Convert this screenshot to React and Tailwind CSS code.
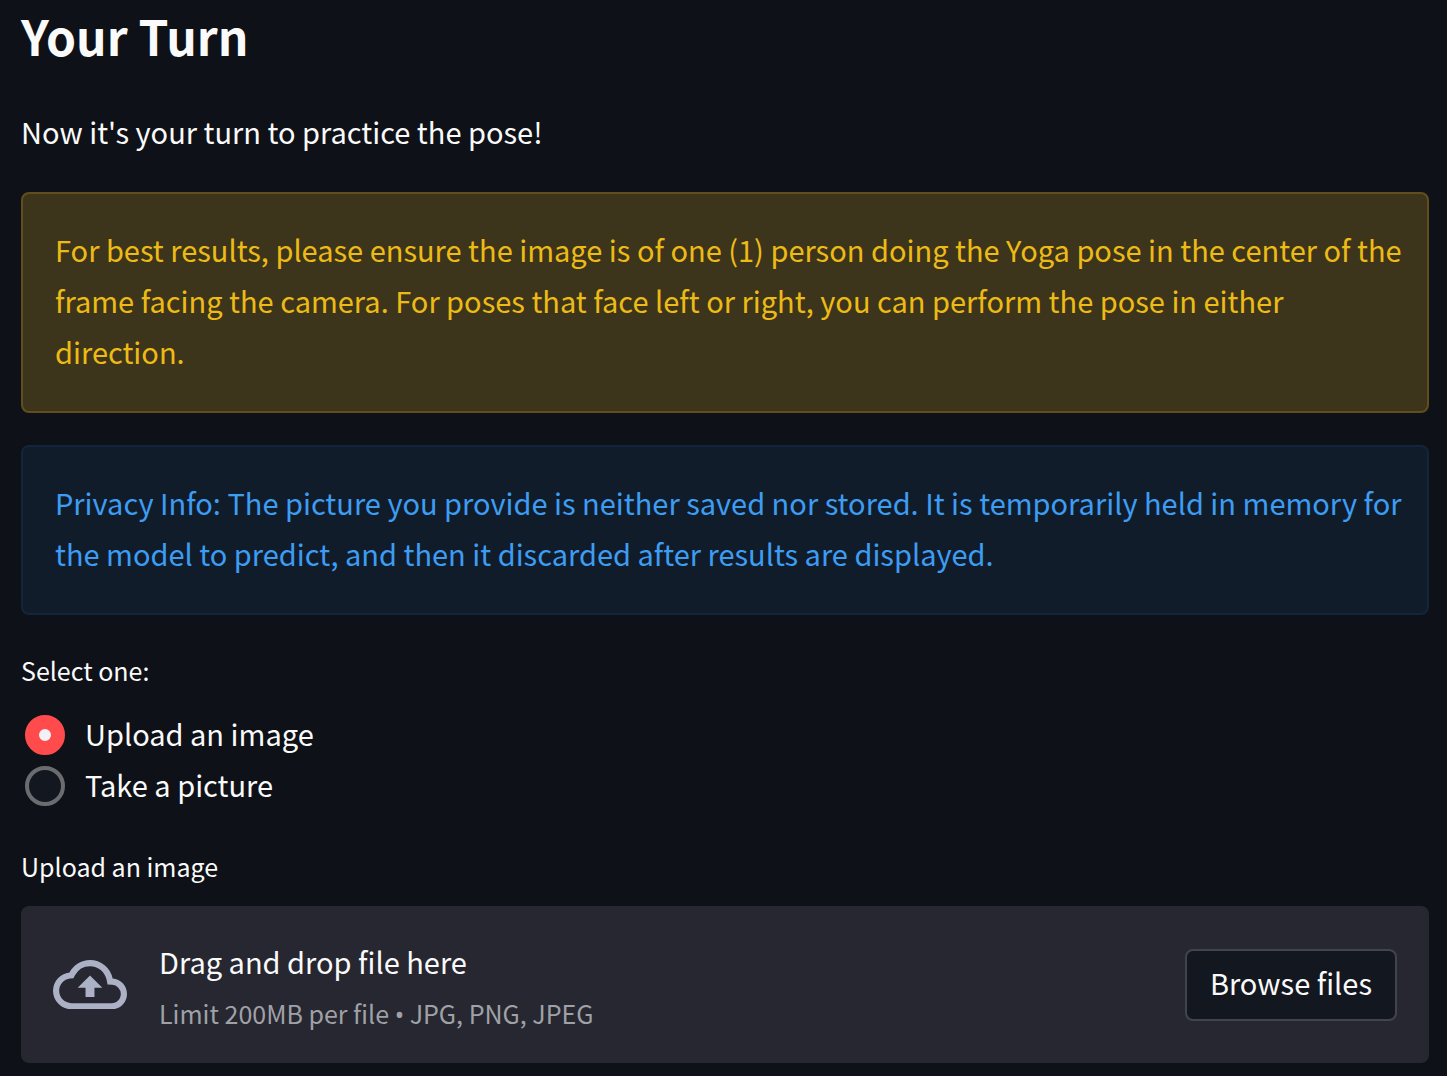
const alertText = "pt-[30px] pr-6 pb-[34px] pl-8 text-[29px] leading-[51px]";

function Radio({ id, label, checked }) {
  return (
    <label htmlFor={id} className="flex items-center gap-5 pl-1 text-[29px] leading-[49px]">
      <input
        id={id}
        type="radio"
        name="source"
        defaultChecked={checked}
        className="size-10 shrink-0 appearance-none rounded-full border-4 border-[#6b6c70] bg-[#131720] checked:border-[14px] checked:border-[#ff4b4b] checked:bg-[#f0f2f6]"
      />
      <span className="pb-0.5">{label}</span>
    </label>
  );
}

export default function App() {
  return (
    <main className="flex min-h-screen flex-col bg-[#0e1117] pr-[18px] pb-3 pl-[21px] font-['Noto_Sans_CJK_SC','Noto_Sans',sans-serif] text-[#fafafa]">
      <h1 className="pt-1 text-[48px] leading-[62px] font-bold">Your Turn</h1>
      <p className="mt-10 text-[29px] leading-[51px]">Now it's your turn to practice the pose!</p>
      <div className="mt-[35px] rounded-lg border-2 border-[#604e1c] bg-[#3d351b] text-[#edbb16]">
        <p className={alertText}>
          For best results, please ensure the image is of one (1) person doing the Yoga pose in the center of the frame
          facing the camera. For poses that face left or right, you can perform the pose in either direction.
        </p>
      </div>
      <div className="mt-8 rounded-lg border-2 border-[#12253d] bg-[#111c2a] text-[#3d9df3]">
        <p className={alertText}>
          Privacy Info: The picture you provide is neither saved nor stored. It is temporarily held in memory for the
          model to predict, and then it discarded after results are displayed.
        </p>
      </div>
      <fieldset className="mt-[33px]">
        <legend className="mb-4 text-[25px] leading-[45px]">Select one:</legend>
        <Radio id="upload" label="Upload an image" checked />
        <Radio id="camera" label="Take a picture" />
      </fieldset>
      <label htmlFor="browse" className="mt-[33px] text-[25px] leading-[45px]">
        Upload an image
      </label>
      <section className="mt-[17px] flex items-center rounded-lg bg-[#262730] px-8 py-6">
        <svg viewBox="0 0 24 16" className="mr-8 w-[74px] shrink-0 fill-[#acb1c6]" aria-hidden="true">
          <path d="M19.35 6.04A7.49 7.49 0 0 0 12 0C9.11 0 6.6 1.64 5.35 4.04A5.994 5.994 0 0 0 0 10c0 3.31 2.69 6 6 6h13c2.76 0 5-2.24 5-5 0-2.64-2.05-4.78-4.65-4.96zM19 14H6c-2.21 0-4-1.79-4-4 0-2.05 1.53-3.76 3.56-3.97l1.07-.11.5-.95A5.469 5.469 0 0 1 12 2c2.62 0 4.88 1.86 5.39 4.43l.3 1.5 1.53.11A2.98 2.98 0 0 1 22 11c0 1.65-1.35 3-3 3zM8 9h2.55v3h2.9V9H16l-4-4z" />
        </svg>
        <div className="flex-1 pt-1.5">
          <p className="text-[29px] leading-[51px]">Drag and drop file here</p>
          <p className="mt-0.5 text-[25px] leading-[49px] text-[#a0a1a6]">
            Limit 200MB per file <span className="font-['Noto_Sans']">•</span> JPG, PNG, JPEG
          </p>
        </div>
        <button
          id="browse"
          type="button"
          className="rounded-lg border-2 border-[#42444d] bg-[#131720] px-[23px] pt-[5px] pb-[11px] text-[29px] leading-[52px]"
        >
          Browse files
        </button>
      </section>
    </main>
  );
}
